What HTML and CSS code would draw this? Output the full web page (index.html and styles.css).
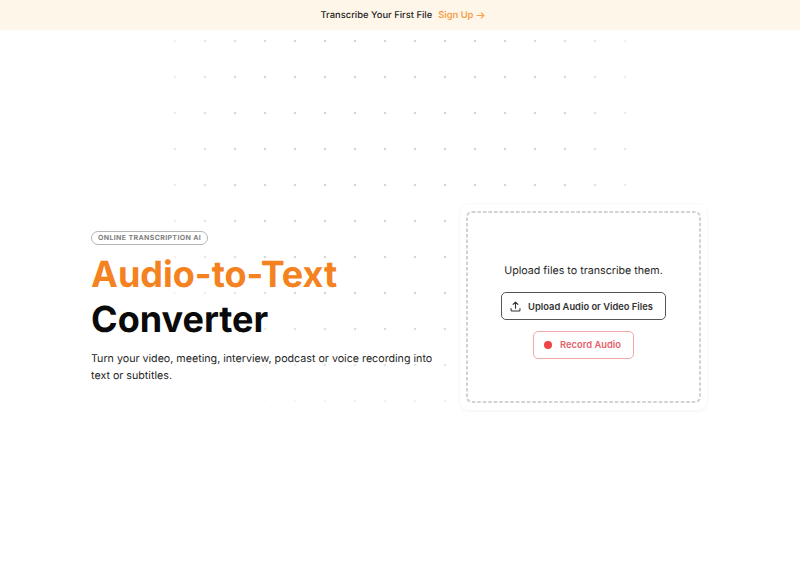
FILE: index.html
```html
<!DOCTYPE html>
<html lang="en">
<head>
<meta charset="utf-8">
<title>Audio-to-Text Converter</title>
<link rel="stylesheet" href="styles.css">
</head>
<body>
<div class="banner">
  <span class="banner-text">Transcribe Your First File</span>
  <a class="banner-link" href="#">Sign Up <svg class="banner-arrow" viewBox="0 0 12 12" width="9" height="9" fill="none" stroke="currentColor" stroke-width="1.500" stroke-linecap="round" stroke-linejoin="round"><path d="M1.500 6h9M7 2.500 10.500 6 7 9.500"/></svg></a>
</div>
<main class="hero">
  <div class="dots"></div>
  <section class="intro">
    <span class="badge">ONLINE TRANSCRIPTION AI</span>
    <h1 class="title"><span class="title-accent">Audio-to-Text</span><br>Converter</h1>
    <p class="lead">Turn your video, meeting, interview, podcast or voice recording into text or subtitles.</p>
  </section>
  <section class="card">
    <div class="drop">
      <svg class="drop-outline" viewBox="0 0 235 192" width="235" height="192" fill="none"><rect x="1" y="1" width="233" height="190" rx="5" stroke="#d2d2d2" stroke-width="2" stroke-dasharray="3.500 2"/></svg>
      <p class="drop-text">Upload files to transcribe them.</p>
      <button class="btn btn-upload" type="button">
        <svg viewBox="0 0 16 16" width="11" height="11" fill="none" stroke="currentColor" stroke-width="1.600" stroke-linecap="round" stroke-linejoin="round"><path d="M8 10.500V1.500M4.500 5 8 1.500 11.500 5M1.500 11v2a1.500 1.500 0 0 0 1.500 1.500h10a1.500 1.500 0 0 0 1.500-1.500v-2"/></svg>
        Upload Audio or Video Files
      </button>
      <button class="btn btn-record" type="button"><span class="rec-dot"></span>Record Audio</button>
    </div>
  </section>
</main>
</body>
</html>
```
FILE: styles.css
```css
* { box-sizing: border-box; }
html, body { margin: 0; padding: 0; height: 100%; overflow: hidden; background: #fff; }
body {
  font-family: Inter, "Liberation Sans", sans-serif;
  color: #0a0a0a;
  text-rendering: geometricPrecision;
}

.banner {
  height: 30px;
  padding-left: 6px;
  background: #fff6ea;
  display: flex;
  align-items: center;
  justify-content: center;
  gap: 6px;
  font-size: 9.400px;
  font-weight: 500;
}
.banner-text { color: #1f1f1f; }
.banner-link { color: #f5a04a; text-decoration: none; font-weight: 600; display: inline-flex; align-items: center; gap: 3px; }

.hero {
  position: relative;
  height: 546px;
  padding: 173px 92px 0 91px;
  display: flex;
  justify-content: space-between;
  align-items: flex-start;
}
.dots {
  position: absolute;
  left: 160px;
  top: 0;
  width: 480px;
  height: 390px;
  background-image: radial-gradient(circle at 15px 11px, #d6d6d6 0, #d6d6d6 0.800px, transparent 1.700px);
  background-size: 30px 36px;
  -webkit-mask-image: radial-gradient(ellipse 290px 300px at 240px 120px, #000 55%, transparent 100%);
  mask-image: radial-gradient(ellipse 290px 300px at 240px 120px, #000 55%, transparent 100%);
}

.intro { position: relative; width: 350px; padding-top: 28px; }
.badge {
  display: inline-block;
  height: 14px;
  line-height: 12px;
  padding: 0 6px;
  border: 1px solid #b5b5b5;
  border-radius: 7px;
  font-size: 7px;
  font-weight: 700;
  letter-spacing: 0.36px;
  color: #808080;
  vertical-align: top;
}
.title {
  margin: 1px 0 0;
  font-size: 36px;
  line-height: 45px;
  font-weight: 700;
  color: #0a0a0a;
}
.title-accent { color: #f58220; }
.lead {
  margin: 8px 0 0;
  font-size: 10.700px;
  line-height: 17px;
  color: #262626;
}

.card {
  position: relative;
  width: 249px;
  height: 208px;
  padding: 7px 6px;
  background: #fff;
  border-radius: 10px;
  border: 1px solid #fafafa;
  box-shadow: 0 1px 2px rgba(0,0,0,.04);
}
.drop {
  position: relative;
  height: 192px;
  display: flex;
  flex-direction: column;
  align-items: center;
  padding-top: 52px;
}
.drop-outline { position: absolute; left: 0; top: 0; }
.drop-text { margin: 0; font-size: 10.700px; line-height: 16px; color: #262626; }
.btn {
  font-family: inherit;
  background: #fff;
  border-radius: 5px;
  display: flex;
  align-items: center;
  justify-content: center;
  height: 28px;
  font-size: 9.350px;
  font-weight: 600;
  padding: 0;
}
.btn-upload { margin-top: 13px; width: 165px; padding-right: 4px; border: 1px solid #555; color: #333; gap: 7px; }
.btn-record { margin-top: 11px; width: 101px; padding: 0 2px 1px 0; border: 1px solid #f2a8a8; color: #e5616a; gap: 8px; }
.rec-dot { width: 8px; height: 8px; border-radius: 50%; background: #ef4444; }
```
